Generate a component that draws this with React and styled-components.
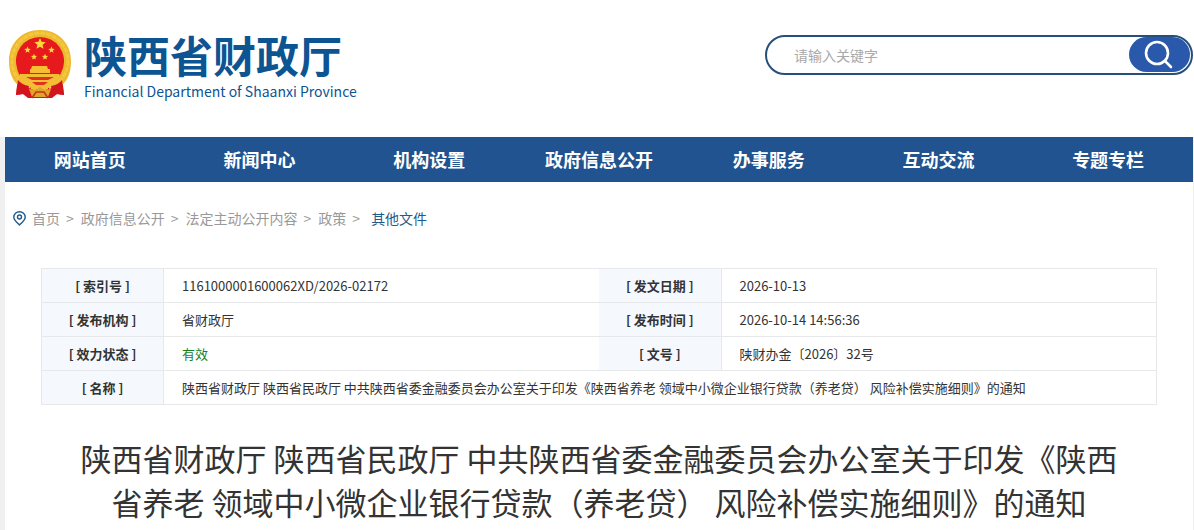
import styled, { createGlobalStyle } from "styled-components";

const navItems = ["网站首页", "新闻中心", "机构设置", "政府信息公开", "办事服务", "互动交流", "专题专栏"];
const crumbs = ["首页", "政府信息公开", "法定主动公开内容", "政策"];
const docTitle =
  "陕西省财政厅 陕西省民政厅 中共陕西省委金融委员会办公室关于印发《陕西省养老 领域中小微企业银行贷款（养老贷） 风险补偿实施细则》的通知";

const star = (cx, cy, r) => {
  const pts = [];
  for (let i = 0; i < 10; i++) {
    const a = (Math.PI / 5) * i - Math.PI / 2;
    const d = i % 2 ? r * 0.45 : r;
    pts.push(`${(cx + d * Math.cos(a)).toFixed(2)},${(cy + d * Math.sin(a)).toFixed(2)}`);
  }
  return pts.join(" ");
};

function Emblem() {
  return (
    <svg width="64" height="70" viewBox="0 0 64 70" aria-hidden="true">
      <path d="M10 46 L8 65 L15 64 L20 68 L44 68 L49 64 L56 65 L54 46 Z" fill="#d4141c" />
      <path
        d="M32 0 C50 0 63 13 63 31 C63 42 60 50 54 55 L44 57 L32 60 L20 57 L10 55 C4 50 1 42 1 31 C1 13 14 0 32 0 Z"
        fill="#eeb92f"
      />
      <circle cx="32" cy="31" r="28" fill="none" stroke="#f3c83f" strokeWidth="3" strokeDasharray="5 1" />
      <path d="M32 7 A24 24 0 0 1 55 38 Q53 44 50 48 H14 Q10 44 9 38 A24 24 0 0 1 32 7 Z" fill="#e61a1c" />
      <g fill="#ffd83c">
        <polygon points={star(32, 14, 6)} />
        <polygon points={star(19.5, 20, 3.4)} />
        <polygon points={star(43.5, 20, 3.4)} />
        <polygon points={star(26, 27, 3.2)} />
        <polygon points={star(37, 27, 3.2)} />
        <path d="M24 36 h15 l1 3 h-17 z M22 39 h20 v4 h-20 z" fill="#f6bd35" />
      </g>
      <path d="M12 44 H51 L54 49 Q50 56 42 55 L37 60 L32 56 L26 60 L21 55 Q13 56 10 49 Z" fill="#f3be35" />
      <path d="M18 47 H46 L40 50 H24 Z M24 52 H40 L36 55 H28 Z" fill="#e0331d" />
      <path d="M10 50 Q14 55 21 56 L19 66 L15 64 L8 65 Z M54 50 Q50 55 43 56 L45 66 L49 64 L56 65 Z" fill="#d4141c" />
      <path d="M21 59 L27 60 L32 57 L37 60 L43 59 L40 67 H24 Z" fill="#dfa52a" />
      <path d="M24 68 L28 62 H36 L40 68" fill="none" stroke="#c9301c" strokeWidth="1.5" />
    </svg>
  );
}

function Header() {
  return (
    <Top>
      <Brand href="#">
        <Emblem />
        <BrandText>
          <BrandName>陕西省财政厅</BrandName>
          <BrandSub>Financial Department of Shaanxi Province</BrandSub>
        </BrandText>
      </Brand>
      <Search>
        <input type="text" placeholder="请输入关键字" aria-label="请输入关键字" />
        <button type="button" aria-label="搜索">
          <svg width="30" height="30" viewBox="0 0 30 30" fill="none" stroke="#fff" strokeWidth="2.6">
            <circle cx="13" cy="13" r="11" />
            <path d="M21 21 L27 27" strokeLinecap="round" />
          </svg>
        </button>
      </Search>
    </Top>
  );
}

function Breadcrumb() {
  return (
    <Crumbs>
      <svg width="13" height="15" viewBox="0 0 13 15" fill="none" stroke="#1f5a8a" strokeWidth="1.4">
        <path d="M6.500 14 C3.500 11 0.800 9 0.800 6.200 A5.700 5.500 0 0 1 12.200 6.200 C12.200 9 9.500 11 6.500 14 Z" />
        <circle cx="6.500" cy="6" r="2" />
      </svg>
      {crumbs.map((c) => (
        <Crumb key={c}>
          <a href="#">{c}</a>
          <span>&gt;</span>
        </Crumb>
      ))}
      <Current href="#">其他文件</Current>
    </Crumbs>
  );
}

function App() {
  return (
    <>
      <GlobalStyle />
      <Header />
      <Main>
        <Nav>
          {navItems.map((item) => (
            <a key={item} href="#">{item}</a>
          ))}
        </Nav>
        <Breadcrumb />
        <Info>
          <colgroup>
            <col className="label" />
            <col />
            <col className="label" />
            <col />
          </colgroup>
          <tbody>
            <tr>
              <Label>[ 索引号 ]</Label>
              <Value>1161000001600062XD/2026-02172</Value>
              <Label>[ 发文日期 ]</Label>
              <Value>2026-10-13</Value>
            </tr>
            <tr>
              <Label>[ 发布机构 ]</Label>
              <Value>省财政厅</Value>
              <Label>[ 发布时间 ]</Label>
              <Value>2026-10-14 14:56:36</Value>
            </tr>
            <tr>
              <Label>[ 效力状态 ]</Label>
              <Value $valid>有效</Value>
              <Label>[ 文号 ]</Label>
              <Value>陕财办金〔2026〕32号</Value>
            </tr>
            <tr>
              <Label>[ 名称 ]</Label>
              <Value colSpan={3}>{docTitle}</Value>
            </tr>
          </tbody>
        </Info>
        <Title>{docTitle}</Title>
      </Main>
    </>
  );
}

export default App;

const GlobalStyle = createGlobalStyle`
  * {
    box-sizing: border-box;
  }
  body {
    margin: 0;
    background: #fff;
    color: #333;
    font-family: "Noto Sans CJK SC", sans-serif;
    overflow-x: hidden;
  }
  a {
    text-decoration: none;
    color: inherit;
  }
`;

const Top = styled.header`
  display: flex;
  justify-content: space-between;
  align-items: flex-start;
  height: 137px;
  padding: 30px 1px 0 8px;
`;

const Brand = styled.a`
  display: flex;
  gap: 12px;
  color: #0d5493;
`;

const BrandText = styled.div`
  display: flex;
  flex-direction: column;
`;

const BrandName = styled.span`
  font-size: 43px;
  line-height: 48px;
  font-weight: 700;
`;

const BrandSub = styled.span`
  font-size: 14px;
  line-height: 26px;
`;

const Search = styled.form`
  display: flex;
  width: 428px;
  height: 40px;
  margin-top: 5px;
  padding-right: 1px;
  border: 2px solid #26507a;
  border-radius: 20px;
  overflow: hidden;
  input {
    flex: 1;
    min-width: 0;
    padding: 0 27px;
    border: 0;
    outline: 0;
    background: none;
    font-family: inherit;
    font-size: 14px;
    &::placeholder {
      color: #a9a9a9;
    }
  }
  button {
    display: flex;
    align-items: center;
    justify-content: center;
    width: 61px;
    height: 35px;
    padding: 0 2px 0 0;
    border: 0;
    border-radius: 18px;
    background: #2a58ab;
  }
`;

const Main = styled.main`
  min-height: calc(100vh - 137px);
  padding-bottom: 24px;
  border-left: 5px solid #f0f0f0;
  border-right: 1px solid #f0f0f0;
`;

const Nav = styled.nav`
  display: grid;
  grid-template-columns: repeat(7, 1fr);
  background: #20538f;
  a {
    color: #fff;
    font-size: 18px;
    font-weight: 700;
    line-height: 45px;
    text-align: center;
  }
`;

const Crumbs = styled.div`
  display: flex;
  align-items: center;
  padding: 25px 8px 0;
  font-size: 14px;
  line-height: 22px;
  color: #999;
  svg {
    margin-right: 6px;
  }
`;

const Crumb = styled.span`
  span {
    margin: 0 7px 0 6px;
  }
`;

const Current = styled.a`
  margin-left: 4px;
  color: #1f5a8a;
`;

const Info = styled.table`
  width: calc(100% - 72px);
  margin: 39px 36px 0;
  border: 1px solid #e6e8ea;
  border-collapse: collapse;
  table-layout: fixed;
  font-size: 13px;
  line-height: 20px;
  .label {
    width: 122px;
  }
  tr {
    height: 34px;
    border-bottom: 1px solid #e6e8ea;
  }
`;

const Label = styled.th`
  padding: 0;
  border-right: 1px solid #e6e8ea;
  background: #f5f9fd;
  font-weight: 700;
  text-align: center;
`;

const Value = styled.td`
  padding: 0 18px;
  color: ${({ $valid }) => ($valid ? "#1a7f1a" : "#333")};
`;

const Title = styled.h1`
  margin: 31px 72px 0;
  font-size: 31px;
  font-weight: 400;
  line-height: 44px;
  text-align: center;
`;
